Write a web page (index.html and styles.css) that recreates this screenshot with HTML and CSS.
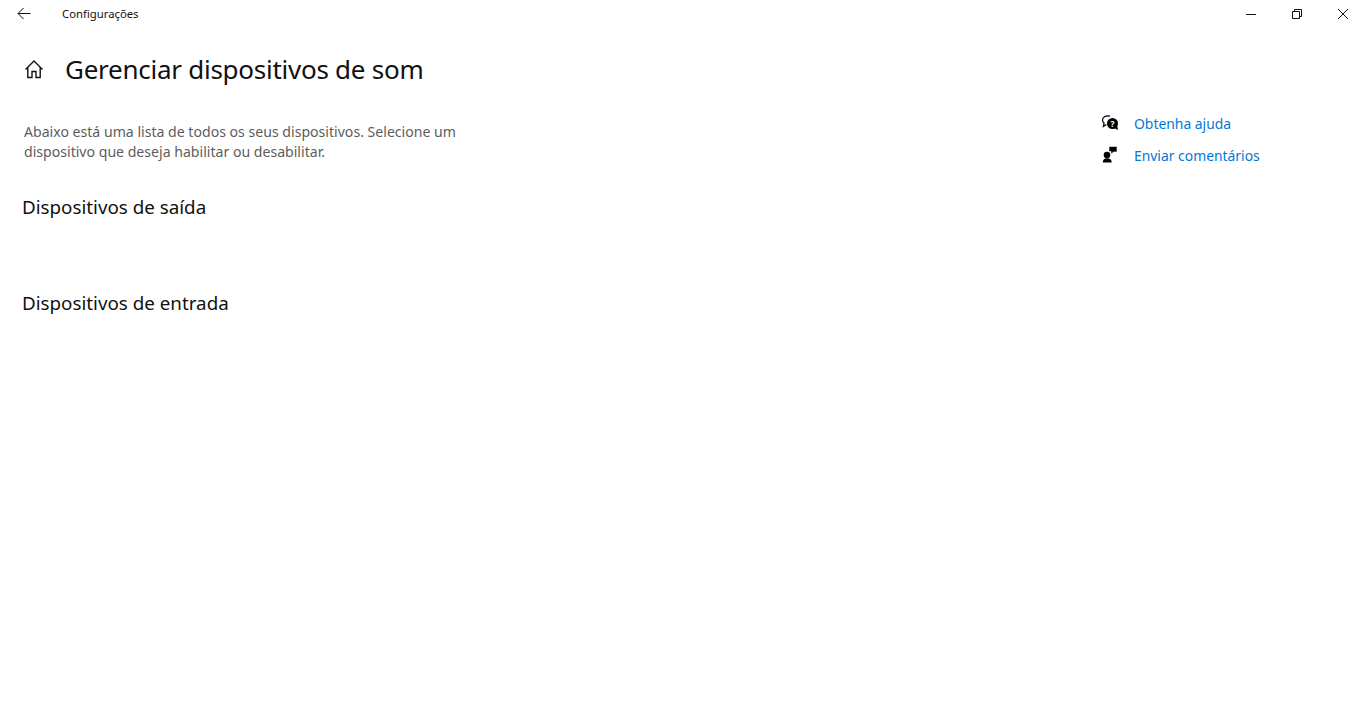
FILE: index.html
```html
<!DOCTYPE html>
<html lang="pt-BR">
<head>
<meta charset="utf-8">
<title>Configurações</title>
<link rel="stylesheet" href="styles.css">
</head>
<body>
<header class="titlebar">
  <button class="back" aria-label="Voltar">
    <svg width="16" height="16" viewBox="0 0 16 16"><path d="M14.500 7.500H2.200M7.500 2 2 7.500 7.500 13" fill="none" stroke="#111" stroke-width="1"/></svg>
  </button>
  <span class="app-name">Configurações</span>
  <div class="controls">
    <span class="ctl"><svg width="12" height="12" viewBox="0 0 12 12"><path d="M1 6.500h10" stroke="#111" stroke-width="1"/></svg></span>
    <span class="ctl"><svg width="12" height="12" viewBox="0 0 12 12"><path d="M1.500 3.500h7v7h-7zM3.500 3.500v-2h7v7h-2" fill="none" stroke="#111" stroke-width="1"/></svg></span>
    <span class="ctl"><svg width="12" height="12" viewBox="0 0 12 12"><path d="M1 1l10 10M11 1 1 11" fill="none" stroke="#111" stroke-width="1"/></svg></span>
  </div>
</header>
<div class="page-head">
  <svg class="home" width="20" height="20" viewBox="0 0 20 20"><path d="M1.500 10.500 10 2l8.500 8.500M3.800 8.500V18.500H8v-6h4v6h4.200V8.500" fill="none" stroke="#111" stroke-width="1.400"/></svg>
  <h1>Gerenciar dispositivos de som</h1>
</div>
<main class="layout">
  <section class="content">
    <p class="intro">Abaixo está uma lista de todos os seus dispositivos. Selecione um dispositivo que deseja habilitar ou desabilitar.</p>
    <h2 class="out">Dispositivos de saída</h2>
    <h2 class="in">Dispositivos de entrada</h2>
  </section>
  <aside class="help">
    <a class="link" href="#">
      <svg width="18" height="18" viewBox="0 0 18 18"><path d="M9 2.100C5 1.100 1.500 3 1.500 6c0 1.300.6 2.400 1.600 3.200L2.400 12.500l3-2" fill="none" stroke="#000" stroke-width="1.200"/><circle cx="11.500" cy="9.500" r="5.500" fill="#000"/><path d="M13 14l4 2-1-5z" fill="#000"/><text x="11.500" y="12.500" class="q">?</text></svg>
      <span>Obtenha ajuda</span>
    </a>
    <a class="link" href="#">
      <svg width="18" height="18" viewBox="0 0 18 18"><circle cx="6" cy="9" r="3.300" fill="#000"/><path d="M1.800 16.500c0-3 1.700-4.300 4.200-4.300s4.700 1.300 4.700 4.300z" fill="#000"/><path d="M8 0.500h8V6h-3.500L10 8.200V5.500H8z" fill="#000" stroke="#fff" stroke-width=".6"/></svg>
      <span>Enviar comentários</span>
    </a>
  </aside>
</main>
</body>
</html>
```
FILE: styles.css
```css
html, body { margin: 0; height: 100%; background: #fff; }
body { font-family: "Noto Sans", "Open Sans", sans-serif; color: #000; overflow: hidden; }
.titlebar { display: flex; align-items: center; height: 27px; }
.back { width: 48px; height: 27px; margin: 0; padding: 0; border: 0; background: none; display: flex; align-items: center; justify-content: center; }
.app-name { margin-left: 14px; font-size: 11.300px; color: #111; }
.controls { display: flex; margin-left: auto; }
.ctl { width: 46px; height: 27px; display: flex; align-items: center; justify-content: center; }
.page-head { display: flex; align-items: center; height: 54px; padding-left: 24px; margin-top: 15px; }
.home { flex: none; }
h1 { margin: 0 0 0 21px; font-size: 26px; font-weight: 400; color: #111; letter-spacing: -.26px; }
.layout { display: flex; justify-content: space-between; }
.content { width: 470px; padding-left: 22px; }
.intro { margin: 26px 0 0 2px; font-size: 14.100px; line-height: 20px; color: #5d5d5d; }
h2 { margin: 0; font-size: 18.800px; font-weight: 400; line-height: 28px; color: #111; }
.out { margin-top: 31px; }
.in { margin-top: 68px; }
.help { width: 265px; display: flex; flex-direction: column; gap: 6px; padding-top: 14px; }
.link { display: flex; align-items: center; height: 26px; color: #0078d7; font-size: 13.900px; text-decoration: none; }
.link svg { flex: none; margin-right: 15px; }
.q { font-size: 8.500px; font-weight: 700; fill: #fff; text-anchor: middle; }
```
